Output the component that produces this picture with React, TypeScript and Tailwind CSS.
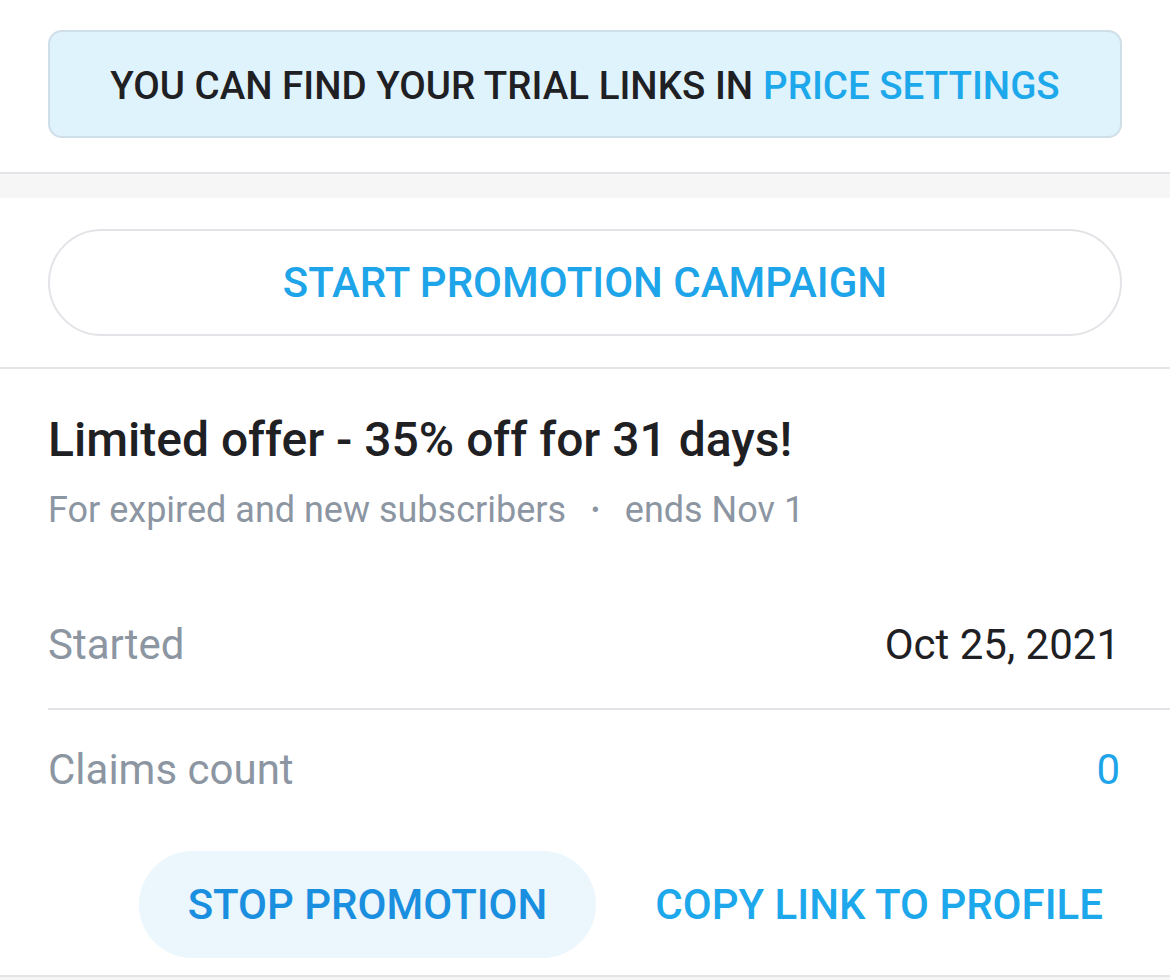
export default function App() {
  return (
    <main className="w-full min-h-[980px] bg-white font-['Roboto',sans-serif] text-[#1f2023]">
      <div className="px-12 pt-[30px] pb-[34px]">
        <div className="flex h-[108px] items-center justify-center rounded-[14px] border-2 border-[#cfdfe9] bg-[#dff3fc] pt-[3px] text-[38.5px] font-medium">
          <span>YOU CAN FIND YOUR TRIAL LINKS IN</span>
          <span className="ml-[10px] text-[#1ea8ec]">PRICE SETTINGS</span>
        </div>
      </div>
      <div className="h-[26px] border-t-2 border-[#e3e3e8] bg-[#f6f6f7]" />

      <div className="px-12 pt-[31px] pb-[31px]">
        <button className="flex h-[107px] w-full items-center justify-center rounded-full border-2 border-[#e4e4e8] text-[42px] font-medium text-[#1ea4e8]">
          START PROMOTION CAMPAIGN
        </button>
      </div>
      <div className="border-t-2 border-[#e3e3e8]" />

      <div className="pt-[42px]">
        <h2 className="px-12 text-[48px] leading-[57px] font-medium">Limited offer - 35% off for 31 days!</h2>
        <p className="mt-[22px] flex items-center px-12 text-[36px] leading-[41px] text-[#8c96a2]">
          For expired and new subscribers
          <span className="mx-[25px] text-[26px]">•</span>
          ends Nov 1
        </p>

        <div className="ml-12 mt-[90px]">
          <div className="flex items-center justify-between border-b-2 border-[#e3e3e8] pr-[50px] pb-[39px] text-[42px] leading-[48px]">
            <span className="text-[#8c96a2]">Started</span>
            <span>Oct 25, 2021</span>
          </div>
          <div className="flex items-center justify-between pr-[50px] pt-[36px] text-[42px] leading-[48px]">
            <span className="text-[#8c96a2]">Claims count</span>
            <span className="text-[#1ea4e8]">0</span>
          </div>
        </div>

        <div className="mt-[57px] flex items-center justify-end pr-[67px] pb-[17px]">
          <button className="flex h-[107px] items-center rounded-full bg-[#ebf6fd] px-[49px] text-[42px] font-medium text-[#1a8fe0]">
            STOP PROMOTION
          </button>
          <button className="ml-[59px] text-[42px] font-medium text-[#1ea8ec]">COPY LINK TO PROFILE</button>
        </div>
        <div className="h-[10px] border-t-2 border-[#e3e3e8] bg-[#f6f6f7]" />
      </div>
    </main>
  );
}
